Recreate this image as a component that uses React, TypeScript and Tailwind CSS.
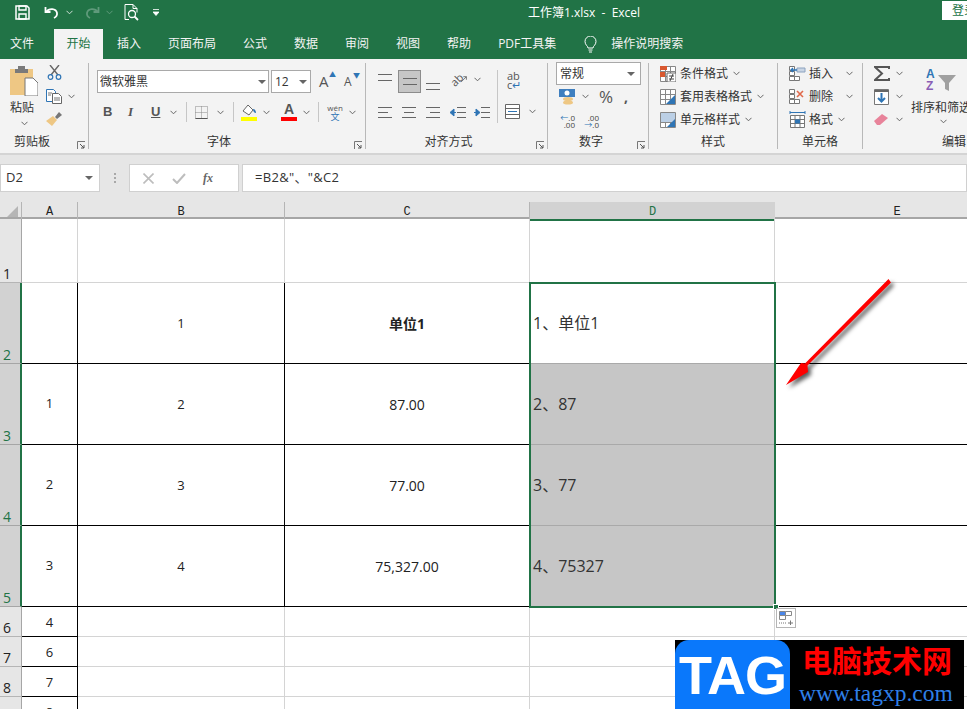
import type { ReactNode } from 'react';

const cjk = '[font-family:"Open_Sans","Noto_Sans_CJK_SC",sans-serif]';

function Chev({ className = '', stroke = '#666' }: { className?: string; stroke?: string }) {
  return (
    <svg width="7" height="5" viewBox="0 0 7 5" className={`shrink-0 ${className}`}>
      <path d="M0.5 0.8 3.5 3.8 6.5 0.8" fill="none" stroke={stroke} strokeWidth="1" />
    </svg>
  );
}

function Caret({ className = '' }: { className?: string }) {
  return (
    <svg width="8" height="4" viewBox="0 0 8 4" className={`shrink-0 ${className}`}>
      <path d="M0 0h8L4 4z" fill="#666" />
    </svg>
  );
}

function Launcher() {
  return (
    <svg width="8" height="8" viewBox="0 0 8 8" className="absolute right-[3px] bottom-0">
      <path d="M0.5 8V0.5H8" fill="none" stroke="#777" />
      <path d="M3 3 7 7M7 4v3H4" fill="none" stroke="#555" />
    </svg>
  );
}

function Lines({ rows, className = '', w = 15, gap = 5 }: { rows: [number, number][]; className?: string; w?: number; gap?: number }) {
  return (
    <svg width={w} height={(rows.length - 1) * gap + 1} viewBox={`0 0 ${w} ${(rows.length - 1) * gap + 1}`} className={`shrink-0 ${className}`}>
      {rows.map(([a, b], i) => (
        <path key={i} d={`M${a} ${0.5 + i * gap}H${b}`} stroke="#666" />
      ))}
    </svg>
  );
}

function Group({ width, label, launcher, children, last, labelPr = 0 }: { width: number; label: string; launcher?: boolean; children: ReactNode; last?: boolean; labelPr?: number }) {
  return (
    <div className={`relative flex h-[86px] shrink-0 flex-col ${last ? '' : 'border-r border-[#b8b8b8]'}`} style={{ width }}>
      <div className="h-[71px]">{children}</div>
      <div className="h-[15px] whitespace-nowrap text-center text-[12px] leading-[15px] text-[#333]" style={{ paddingRight: labelPr }}>{label}</div>
      {launcher && <Launcher />}
    </div>
  );
}

function VSep({ className = '' }: { className?: string }) {
  return <div className={`h-[20px] w-px shrink-0 bg-[#c6c6c6] ${className}`} />;
}

function StyleIcon({ kind }: { kind: number }) {
  return (
    <svg width="16" height="16" viewBox="0 0 16 16" className="shrink-0">
      <path d="M0.5 0.5h15v15h-15zM0.5 5.5h15M0.5 10.5h15M5.5 0.5v15M10.5 0.5v15" fill="#fff" stroke="#888" />
      {kind === 0 && <path d="M0 0h7v4H0z M0 6h5v5H0z" fill="#d9582f" />}
      {kind === 0 && <path d="M7 7h9v9H7z" fill="#fff" stroke="#666" />}
      {kind === 0 && <path d="M9 10h5M9 13h5M13 8l-3 7" stroke="#444" fill="none" />}
      {kind === 1 && <path d="M6 15 15 6v9z" fill="#2f75b5" />}
      {kind === 2 && <path d="M1 1h14v9H1z" fill="#bcd0e6" />}
      {kind === 2 && <path d="M7 15 15 7v8z" fill="#2f75b5" />}
    </svg>
  );
}

function CellIcon({ kind }: { kind: number }) {
  return (
    <svg width="17" height="17" viewBox="0 0 17 17" className="shrink-0">
      {kind < 2 && <path d="M0.5 1.5h5v4h-5zM0.5 6.5h5v4h-5zM0.5 11.5h5v4h-5zM5.5 11.5h5v4h-5z" fill="#fff" stroke="#777" />}
      {kind === 0 && <path d="M8 3h8v4H8z" fill="#c9d5e5" stroke="#8ca3bf" />}
      {kind === 0 && <path d="M8 5H2M4 3 2 5l2 2" fill="none" stroke="#2f75b5" strokeWidth="1.4" />}
      {kind === 1 && <path d="M8 3l6 6M14 3 8 9" stroke="#e0694a" strokeWidth="1.6" />}
      {kind === 2 && <path d="M1.5 4.5h14v12h-14zM1.5 8.5h14M1.5 12.5h14M6 4.5v12M11 4.5v12" fill="#fff" stroke="#777" />}
      {kind === 2 && <path d="M6 8.5h5v4H6z" fill="#2f75b5" />}
      {kind === 2 && <path d="M1 1.5h15M1 0v3M16 0v3" stroke="#2f75b5" />}
    </svg>
  );
}

function TitleBar() {
  return (
    <div className="flex h-[29px] items-center bg-[#217346] pb-[4px]">
      <svg width="15" height="15" viewBox="0 0 15 15" className="ml-[15px]">
        <path d="M1 1h11l2 2v11H1z" fill="none" stroke="#fff" strokeWidth="1.5" />
        <path d="M4 1h7v4H4zM4 9h7v5H4z" fill="none" stroke="#fff" strokeWidth="1.4" />
      </svg>
      <svg width="15" height="14" viewBox="0 0 15 14" className="ml-[14px]">
        <path d="M1.500 1v5h5" fill="none" stroke="#fff" strokeWidth="1.8" />
        <path d="M2 6c3-4 10-4 11 1 .4 2.500-1 4-3 5" fill="none" stroke="#fff" strokeWidth="1.8" />
      </svg>
      <Chev className="ml-[7px]" stroke="#cfe0d6" />
      <svg width="15" height="14" viewBox="0 0 15 14" className="ml-[12px]">
        <path d="M13.500 1v5h-5" fill="none" stroke="#5f9a7b" strokeWidth="1.8" />
        <path d="M13 6C10 2 3 2 2 7c-.4 2.500 1 4 3 5" fill="none" stroke="#5f9a7b" strokeWidth="1.8" />
      </svg>
      <Chev className="ml-[6px]" stroke="#5f9a7b" />
      <svg width="15" height="17" viewBox="0 0 15 17" className="ml-[11px]">
        <path d="M1 .5h8l4 4v4M9 .5v4h4M5 15.500H1V.5" fill="none" stroke="#fff" />
        <circle cx="8" cy="10" r="3.500" fill="none" stroke="#fff" strokeWidth="1.300" />
        <path d="M10.500 12.500 14 16" stroke="#fff" strokeWidth="1.800" />
      </svg>
      <svg width="6" height="7" viewBox="0 0 6 7" className="ml-[14px]">
        <path d="M0 .5h6M0 3h6L3 6.500z" fill="#fff" stroke="#fff" strokeWidth=".8" />
      </svg>
      <span className="ml-[369px] whitespace-pre text-[12px] text-white">工作簿1.xlsx  -  Excel</span>
      <div className="mb-[4px] ml-auto h-[19px] w-[25px] overflow-hidden bg-white pl-[10px] text-[12px] leading-[19px] whitespace-nowrap text-[#217346]">登录</div>
    </div>
  );
}

const tabs: [string, number][] = [
  ['开始', 20],
  ['插入', 14],
  ['页面布局', 27],
  ['公式', 27],
  ['数据', 27],
  ['审阅', 27],
  ['视图', 27],
  ['帮助', 27],
  ['PDF工具集', 27],
];

function Tabs() {
  return (
    <div className="flex h-[30px] items-center bg-[#217346] pl-[10px] text-[12px] text-[#f4f4f4]">
      <span>文件</span>
      {tabs.map(([t, ml], i) =>
        i === 0 ? (
          <span key={t} className="ml-[20px] flex h-[30px] w-[49px] items-center justify-center bg-[#f3f3f3] text-[#217346]">{t}</span>
        ) : (
          <span key={t} style={{ marginLeft: ml }} className="whitespace-nowrap">{t}</span>
        ),
      )}
      <svg width="13" height="17" viewBox="0 0 13 17" className="ml-[28px]">
        <path d="M4 12c0-2-3-3-3-6.500a5.500 5.500 0 0 1 11 0C12 9 9 10 9 12z" fill="none" stroke="#fff" />
        <path d="M4.500 14h4M5 16h3" stroke="#fff" />
      </svg>
      <span className="ml-[14px] whitespace-nowrap">操作说明搜索</span>
    </div>
  );
}

function Clipboard() {
  return (
    <Group width={89} label="剪贴板" launcher labelPr={24}>
      <div className="flex">
        <div className="ml-[10px] flex w-[28px] flex-col pt-[3px]">
          <svg width="28" height="30" viewBox="0 0 28 30">
            <path d="M0 3h23v26H0z" fill="#eec784" />
            <path d="M8 3V0h7v3h3v4H5V3z" fill="#7a7a7a" />
            <path d="M15 12h8l5 5v13H15z" fill="#fff" stroke="#777" />
          </svg>
          <span className="mt-[3px] text-[12px] leading-[17px] whitespace-nowrap text-[#333]">粘贴</span>
          <Chev className="mt-[5px] ml-[11px]" />
        </div>
        <div className="ml-[8px] flex flex-col pt-[2px]">
          <svg width="15" height="15" viewBox="0 0 15 15" className="ml-[1px]">
            <path d="M3 0l8 10M12 0 4 10" stroke="#666" strokeWidth="1.400" />
            <circle cx="3.500" cy="12" r="2.300" fill="none" stroke="#2f75b5" strokeWidth="1.200" />
            <circle cx="11.500" cy="12" r="2.300" fill="none" stroke="#2f75b5" strokeWidth="1.200" />
          </svg>
          <div className="mt-[9px] flex items-center">
            <svg width="16" height="15" viewBox="0 0 16 15">
              <path d="M.5.500h7l2 2v10h-9z" fill="#fff" stroke="#2f75b5" />
              <path d="M6.500 4.500h6l3 3v7h-9z" fill="#fff" stroke="#666" />
              <path d="M8 9h6M8 11h6M2 4h4M2 6h3" stroke="#777" />
            </svg>
            <Chev className="ml-[6px]" />
          </div>
          <svg width="16" height="15" viewBox="0 0 16 15" className="mt-[7px]">
            <path d="M9 6 13 1l3 3-5 4z" fill="#777" />
            <path d="M0 10 7 5l4 4-5 6z" fill="#eec784" />
          </svg>
        </div>
      </div>
    </Group>
  );
}

function FontGroup() {
  return (
    <Group width={277} label="字体" launcher labelPr={16}>
      <div className="flex items-center pt-[7px] pl-[8px]">
        <div className="flex h-[23px] w-[172px] items-center justify-between border border-[#a9a9a9] bg-white px-[2px] text-[12px] text-[#333]">
          <span>微软雅黑</span>
          <Caret />
        </div>
        <div className="ml-[2px] flex h-[23px] w-[40px] items-center justify-between border border-[#a9a9a9] bg-white px-[3px] text-[12px] text-[#333]">
          <span>12</span>
          <Caret />
        </div>
        <span className="relative ml-[8px] w-[16px] text-[15px] leading-none text-[#555]">A<span className="absolute -top-[3px] left-[10px] text-[7px] text-[#2f75b5]">▲</span></span>
        <span className="relative ml-[9px] w-[16px] text-[12px] leading-none text-[#555]">A<span className="absolute -top-[4px] left-[9px] text-[7px] text-[#2f75b5]">▼</span></span>
      </div>
      <div className="mt-[9px] flex h-[20px] items-center pl-[14px] text-[#555]">
        <span className="w-[12px] text-[13px] font-bold [font-family:'Liberation_Sans']">B</span>
        <span className="ml-[13px] w-[10px] text-[13px] font-bold italic [font-family:'Liberation_Serif']">I</span>
        <span className="ml-[13px] w-[11px] text-[13px] font-bold underline [font-family:'Liberation_Sans']">U</span>
        <Chev className="ml-[8px]" />
        <VSep className="ml-[9px]" />
        <svg width="13" height="13" viewBox="0 0 13 13" className="ml-[8px]">
          <path d="M.5.500h12v12H.5zM.5 6.500h12M6.500.500v12" fill="none" stroke="#888" strokeDasharray="1 1" />
          <path d="M.5 12.500h12" stroke="#555" />
        </svg>
        <Chev className="ml-[9px]" />
        <VSep className="ml-[9px]" />
        <svg width="16" height="18" viewBox="0 0 16 18" className="ml-[7px]">
          <path d="M2 8 7 2l5 5-4 5z" fill="#fff" stroke="#666" />
          <path d="M12 6c2 0 3 2 3 4-2 0-3-2-3-4" fill="#2f75b5" />
          <path d="M0 14h16v4H0z" fill="#ffff00" />
        </svg>
        <Chev className="ml-[6px]" />
        <div className="ml-[11px] flex w-[16px] flex-col items-center">
          <span className="h-[13px] text-[14px] leading-[13px] font-bold text-[#555] [font-family:'Liberation_Sans']">A</span>
          <span className="mt-[1px] h-[4px] w-[16px] bg-[#ff0000]" />
        </div>
        <Chev className="ml-[6px]" />
        <VSep className="ml-[8px]" />
        <div className="ml-[8px] flex w-[16px] flex-col items-center leading-none">
          <span className="text-[8px] text-[#555]">wén</span>
          <span className="text-[9px] text-[#2f75b5]">文</span>
        </div>
        <Chev className="ml-[6px]" />
      </div>
    </Group>
  );
}

function Align() {
  return (
    <Group width={182} label="对齐方式" launcher labelPr={16}>
      <div className="flex h-[71px]">
        <div className="flex w-[131px] flex-col pt-[7px] pl-[12px]">
          <div className="flex h-[23px]">
            <Lines className="mt-[4px]" gap={6} rows={[[0, 14], [0, 14]]} />
            <div className="ml-[5px] flex h-[23px] w-[23px] items-center justify-center border border-[#8c8c8c] bg-[#c6c6c6]">
              <Lines w={14} gap={6} rows={[[0, 14], [0, 14]]} />
            </div>
            <Lines className="mt-[13px] ml-[5px]" gap={6} rows={[[0, 14], [0, 14]]} />
            <div className="ml-[9px] flex h-[18px] w-[17px] items-center justify-center">
              <span className="-rotate-45 text-[11px] leading-none text-[#555]">ab</span>
              <svg width="8" height="8" viewBox="0 0 8 8" className="-ml-[2px]"><path d="M0 8 7 1M3 1h4v4" fill="none" stroke="#555" /></svg>
            </div>
            <Chev className="mt-[7px] ml-[7px]" />
          </div>
          <div className="mt-[9px] flex h-[20px] items-center">
            <Lines rows={[[0, 14], [0, 10], [0, 14]]} />
            <Lines className="ml-[9px]" rows={[[0, 14], [2, 12], [0, 14]]} />
            <Lines className="ml-[9px]" rows={[[0, 14], [4, 14], [0, 14]]} />
            <svg width="16" height="11" viewBox="0 0 16 11" className="ml-[9px]">
              <path d="M7 .5h9M7 5.500h9M7 10.500h9" stroke="#666" />
              <path d="M0 5.500 4 2v7zM3 5.500h3" fill="#2f75b5" stroke="#2f75b5" />
            </svg>
            <svg width="16" height="11" viewBox="0 0 16 11" className="ml-[8px]">
              <path d="M7 .5h9M7 5.500h9M7 10.500h9" stroke="#666" />
              <path d="M6 5.500 2 2v7zM0 5.500h3" fill="#2f75b5" stroke="#2f75b5" />
            </svg>
          </div>
        </div>
        <div className="mt-[7px] h-[53px] w-px bg-[#c6c6c6]" />
        <div className="flex flex-col pt-[9px] pl-[7px]">
          <div className="ml-[2px] flex h-[17px] w-[14px] flex-col text-[11px] leading-[8px] text-[#555]">
            <span>ab</span>
            <span className="mt-[1px] whitespace-nowrap">c<span className="text-[#2f75b5]">↵</span></span>
          </div>
          <div className="mt-[15px] flex items-center">
            <svg width="15" height="15" viewBox="0 0 15 15">
              <path d="M.5.500h14v14H.5zM.5 4.500h14M.5 10.500h14" fill="#fff" stroke="#666" />
              <path d="M3 7.500h9" stroke="#2f75b5" />
            </svg>
            <Chev className="ml-[9px]" />
          </div>
        </div>
      </div>
    </Group>
  );
}

function NumberGroup() {
  return (
    <Group width={101} label="数字" launcher labelPr={14}>
      <div className="-mt-px ml-[8px] flex h-[23px] w-[85px] items-center justify-between border border-[#a9a9a9] bg-white px-[3px] text-[12px] text-[#333]">
        <span>常规</span>
        <Caret className="mr-[2px]" />
      </div>
      <div className="mt-[3px] flex h-[17px] items-center pl-[11px]">
        <svg width="16" height="16" viewBox="0 0 16 16">
          <path d="M0 0h16v8H0z" fill="#3f7fbf" />
          <circle cx="8" cy="4" r="2.500" fill="#fff" />
          <ellipse cx="9" cy="10" rx="5" ry="2" fill="#eec784" />
          <ellipse cx="9" cy="13.500" rx="5" ry="2" fill="#eec784" />
        </svg>
        <Chev className="ml-[7px]" />
        <span className="ml-[10px] text-[17px] leading-none text-[#555]">%</span>
        <span className="ml-[11px] text-[14px] leading-none font-bold text-[#555]">,</span>
      </div>
      <div className="mt-[9px] flex items-center pl-[11px] text-[8px] leading-[7px] text-[#444]">
        <div className="flex w-[16px] flex-col items-end"><span><span className="text-[#2f75b5]">←</span>.0</span><span>.00</span></div>
        <div className="ml-[8px] flex w-[16px] flex-col items-end"><span>.00</span><span><span className="text-[#2f75b5]">→</span>.0</span></div>
      </div>
    </Group>
  );
}

function ListRow({ icon, text, chevMl = 5, gap = 4 }: { icon: ReactNode; text: string; chevMl?: number; gap?: number }) {
  return (
    <div className="flex h-[23px] items-center whitespace-nowrap text-[12px] text-[#333]">
      {icon}
      <span style={{ marginLeft: gap }}>{text}</span>
      <span style={{ marginLeft: chevMl }}><Chev /></span>
    </div>
  );
}

function Styles() {
  return (
    <Group width={129} label="样式">
      <div className="-mt-px pl-[11px]">
        {['条件格式', '套用表格格式', '单元格样式'].map((t, i) => (
          <ListRow key={t} icon={<StyleIcon kind={i} />} text={t} />
        ))}
      </div>
    </Group>
  );
}

function Cells() {
  return (
    <Group width={85} label="单元格">
      <div className="-mt-px pl-[11px]">
        {[['插入', 13], ['删除', 13], ['格式', 5]].map(([t, m], i) => (
          <ListRow key={t as string} icon={<CellIcon kind={i} />} text={t as string} chevMl={m as number} gap={3} />
        ))}
      </div>
    </Group>
  );
}

function Edit() {
  return (
    <Group width={182} label="编辑" last>
      <div className="flex">
        <div className="-mt-px ml-[11px] flex w-[30px] flex-col">
          <div className="flex h-[23px] items-center">
            <svg width="16" height="15" viewBox="0 0 16 15"><path d="M15 3V1H1l7 6.500L1 14h14v-2" fill="none" stroke="#555" strokeWidth="2" /></svg>
            <Chev className="ml-[6px]" />
          </div>
          <div className="flex h-[23px] items-center">
            <svg width="15" height="16" viewBox="0 0 15 16"><path d="M.5.500h14v15H.5z" fill="#fff" stroke="#777" /><path d="M.5 2h14" stroke="#666" strokeWidth="2" /><path d="M7.500 4v8M4 9l3.500 3.500L11 9" fill="none" stroke="#2f75b5" strokeWidth="2" /></svg>
            <Chev className="ml-[7px]" />
          </div>
          <div className="flex h-[23px] items-center">
            <svg width="15" height="13" viewBox="0 0 15 13"><path d="M0 8 8 1l6 4-8 7H3z" fill="#e8839a" /></svg>
            <Chev className="ml-[7px]" />
          </div>
        </div>
        <div className="ml-[7px] flex w-[55px] shrink-0 flex-col pt-[4px]">
          <svg width="32" height="24" viewBox="0 0 32 24" className="ml-[15px]">
            <text x="0" y="11" fontSize="12" fontWeight="bold" fill="#2f75b5" fontFamily="Liberation Sans">A</text>
            <text x="0" y="23" fontSize="12" fontWeight="bold" fill="#8a5db5" fontFamily="Liberation Sans">Z</text>
            <path d="M12 8h18l-7 8v8l-4-2v-6z" fill="#a0a0a0" />
          </svg>
          <span className="mt-[9px] text-[12px] leading-[16px] whitespace-nowrap text-[#333]">排序和筛选</span>
          <Chev className="mt-[3px] ml-[29px]" />
        </div>
      </div>
    </Group>
  );
}

function Ribbon() {
  return (
    <div className="flex h-[94px] bg-[#f3f3f3] pt-[4px]">
      <Clipboard />
      <FontGroup />
      <Align />
      <NumberGroup />
      <Styles />
      <Cells />
      <Edit />
    </div>
  );
}

function FormulaBar() {
  return (
    <div className="flex h-[49px] items-start border-t-2 border-[#d4d4d4] bg-[#e6e6e6] pt-[9px] text-[13px] text-[#333]">
      <div className="flex h-[28px] w-[100px] items-center justify-between border border-[#d0d0d0] bg-white pr-[6px] pl-[5px]">
        <span>D2</span>
        <Caret />
      </div>
      <div className="ml-[14px] flex h-[28px] flex-col items-center justify-center gap-[2px]">
        <i className="h-[2px] w-[2px] bg-[#a8a8a8]" />
        <i className="h-[2px] w-[2px] bg-[#a8a8a8]" />
        <i className="h-[2px] w-[2px] bg-[#a8a8a8]" />
      </div>
      <div className="ml-[13px] flex h-[28px] w-[110px] items-center border border-[#d0d0d0] bg-white">
        <svg width="11" height="11" viewBox="0 0 11 11" className="ml-[13px]"><path d="M.5.500l10 10M10.500.500l-10 10" stroke="#bdbdbd" strokeWidth="1.600" /></svg>
        <svg width="14" height="11" viewBox="0 0 14 11" className="ml-[18px]"><path d="M1 6l4 4 8-9" fill="none" stroke="#bdbdbd" strokeWidth="2" /></svg>
        <span className="ml-[17px] text-[12px] font-bold text-[#666] italic [font-family:'Liberation_Serif']">fx</span>
      </div>
      <div className="ml-[3px] flex h-[28px] flex-1 items-center border border-[#d0d0d0] bg-white pl-[12px] tracking-[0.3px]">=B2&amp;"、"&amp;C2</div>
    </div>
  );
}

const colHeads = ['A', 'B', 'C', 'D', 'E'];

function ColumnHeader() {
  return (
    <div className="grid h-[17px] grid-cols-[22px_56px_207px_245px_245px_245px] border-b-2 border-[#a6a6a6] bg-[#e6e6e6] text-[12px] leading-[13px] [font-family:'Liberation_Mono']">
      <div className="relative border-r border-[#b5b5b5]">
        <svg width="11" height="11" viewBox="0 0 11 11" className="absolute right-[3px] bottom-[2px]"><path d="M11 0v11H0z" fill="#b5b5b5" /></svg>
      </div>
      {colHeads.map(c => (
        <div key={c} className={c === 'D' ? '-mb-[2px] border-b-2 border-[#217346] bg-[#d2d2d2] pt-[4px] text-center text-[#217346]' : 'border-r border-[#b5b5b5] pt-[4px] text-center text-[#222]'}>{c}</div>
      ))}
    </div>
  );
}

type Row = { n: string; h: number; sel?: boolean; a?: string; b?: string; c?: string; d?: string; head?: boolean; tight?: boolean };

const rows: Row[] = [
  { n: '1', h: 64 },
  { n: '2', h: 81, sel: true, b: '1', c: '单位1', d: '1、单位1', head: true },
  { n: '3', h: 81, sel: true, a: '1', b: '2', c: '87.00', d: '2、87' },
  { n: '4', h: 81, sel: true, a: '2', b: '3', c: '77.00', d: '3、77' },
  { n: '5', h: 81, sel: true, a: '3', b: '4', c: '75,327.00', d: '4、75327' },
  { n: '6', h: 30, a: '4', tight: true },
  { n: '7', h: 30, a: '6', tight: true },
  { n: '8', h: 30, a: '7', tight: true },
  { n: '9', h: 30, a: '8', tight: true },
];

function SheetRow({ r }: { r: Row }) {
  const boxed = r.sel === true;
  const head = r.n === '1';
  const aBottom = r.a || r.n === '2' ? 'border-black' : 'border-[#d4d4d4]';
  const line = boxed ? 'border-black' : 'border-[#d4d4d4]';
  return (
    <div className="grid grid-cols-[22px_56px_207px_245px_245px_1fr] text-[13px] text-[#222]" style={{ height: r.h }}>
      <div className={`flex items-end border-b px-[3px] text-[14px] leading-[17px] ${boxed ? 'border-r-2 border-b-[#a6a6a6] border-r-[#217346] bg-[#d2d2d2] text-[#217346]' : 'border-r border-b-[#b5b5b5] border-r-[#a6a6a6] bg-[#e6e6e6] text-[#222]'}`}>{r.n}</div>
      <div className={`flex justify-center border-r border-b ${aBottom} ${head ? 'border-r-[#d4d4d4]' : 'border-r-black'} ${r.tight ? 'items-start pt-[6px]' : 'items-center'}`}>{r.a}</div>
      <div className={`flex items-center justify-center border-r border-b ${line} pt-[2px]`}>{r.b}</div>
      <div className={`flex items-center justify-center border-r border-b ${line} text-[14px] ${r.head ? 'font-bold' : ''}`}>{r.c}</div>
      <div className={`flex items-center border-r border-b pl-[3px] text-[16px] text-[#333] ${boxed ? 'border-r-black border-b-[#a9a9a9]' : 'border-[#d4d4d4]'} ${r.sel && !r.head ? 'bg-[#c6c6c6]' : ''}`}>{r.d}</div>
      <div className={`border-b ${line}`} />
    </div>
  );
}

function Watermark() {
  return (
    <div className="absolute top-[640px] left-[675px] flex h-[69px] w-[289px] bg-black">
      <div className="flex h-[69px] w-[115px] items-center justify-center rounded-t-[14px] bg-[#0a78fb] text-[54px] leading-none font-bold tracking-[-1px] text-white [font-family:'Liberation_Sans']">TAG</div>
      <div className="flex flex-col pl-[12px]">
        <span className="mt-[3px] text-[30px] leading-[33px] font-bold whitespace-nowrap text-[#ff0000] [font-family:'Noto_Sans_CJK_SC']">电脑技术网</span>
        <span className="mt-[3px] -ml-[3px] text-[23.500px] leading-[28px] whitespace-nowrap text-[#2e7fe8] [font-family:'Liberation_Serif']">www.tagxp.com</span>
      </div>
    </div>
  );
}

function Overlays() {
  return (
    <>
      {/* 选区边框 */}
      <div className="pointer-events-none absolute top-[282px] left-[529px] h-[326px] w-[247px] border-2 border-[#217346]" />
      <div className="absolute top-[604px] left-[773px] h-[6px] w-[6px] border border-white bg-[#217346]" />
      <div className="absolute top-[608px] left-[776px] flex h-[20px] w-[20px] items-center justify-center border border-[#b5b5b5] bg-white">
        <svg width="14" height="14" viewBox="0 0 14 14">
          <path d="M.5.500h6v4h-6z" fill="#4a86e8" stroke="#888" />
          <path d="M6.500.500h6v4h-6zM.5 4.500h6v4h-6z" fill="#fff" stroke="#888" />
          <path d="M0 12h7" stroke="#777" strokeDasharray="1 1" />
          <path d="M9 12h5M11.500 9.500v5" stroke="#777" />
        </svg>
      </div>
      <svg width="120" height="120" viewBox="0 0 120 120" className="pointer-events-none absolute top-[275px] left-[780px] [filter:drop-shadow(3px_3px_2px_rgba(0,0,0,0.65))]">
        <path d="M108.500 4 111 7.500 27.500 90.500 28 97 6 110 21 88 25 88.500z" fill="#ff0000" />
      </svg>
    </>
  );
}

export default function App() {
  return (
    <div className={`relative h-[709px] w-[967px] overflow-hidden bg-white ${cjk}`}>
      <TitleBar />
      <Tabs />
      <Ribbon />
      <FormulaBar />
      <ColumnHeader />
      {rows.map(r => (
        <SheetRow key={r.n} r={r} />
      ))}
      <Overlays />
      <Watermark />
    </div>
  );
}
